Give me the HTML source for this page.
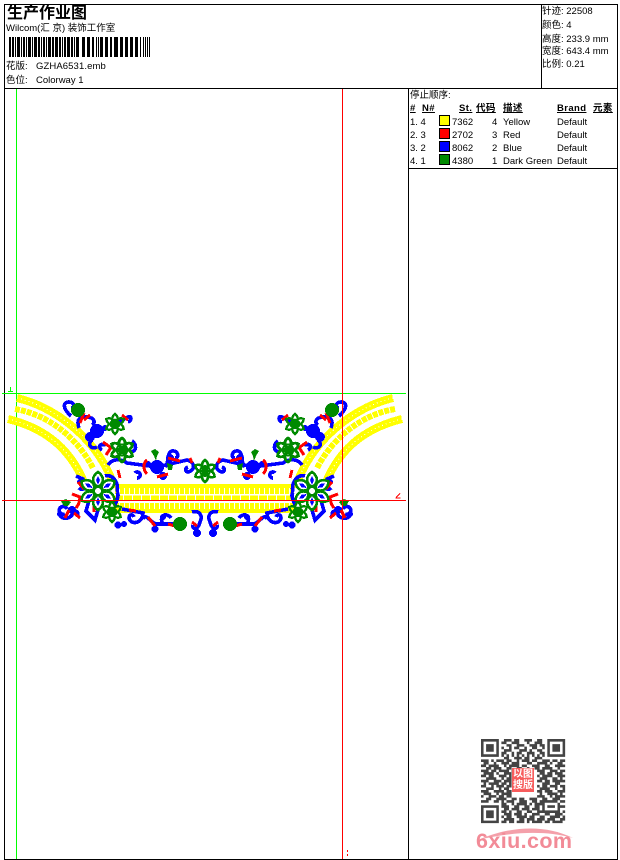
<!DOCTYPE html>
<html><head><meta charset="utf-8">
<style>
html,body{margin:0;padding:0;background:#fff}
#p{position:relative;width:620px;height:860px;overflow:hidden;background:#fff;font-family:"Liberation Sans","WenQuanYi Zen Hei","Noto Sans CJK SC",sans-serif;font-size:9.5px;color:#000}
.t{position:absolute;white-space:pre;line-height:12px}
.l{position:absolute;background:#000}
.b{font-weight:bold;letter-spacing:.4px;text-decoration:underline}
.s{position:absolute;left:439px;width:9px;height:9px;border:1px solid #000}
svg{position:absolute;left:0;top:0}
</style></head><body><div id="p">
<div class="l" style="left:4px;top:4px;width:614px;height:1px"></div>
<div class="l" style="left:4px;top:859px;width:614px;height:1px"></div>
<div class="l" style="left:4px;top:4px;width:1px;height:856px"></div>
<div class="l" style="left:617px;top:4px;width:1px;height:856px"></div>
<div class="l" style="left:4px;top:88px;width:614px;height:1px"></div>
<div class="l" style="left:541px;top:4px;width:1px;height:85px"></div>
<div class="l" style="left:408px;top:88px;width:1px;height:772px"></div>
<div class="l" style="left:408px;top:168px;width:210px;height:1px"></div>

<div class="t" style="left:7px;top:6px;font-size:16px;line-height:16px;font-weight:bold">生产作业图</div>
<div class="t" style="left:6px;top:23px">Wilcom(汇 京) 装饰工作室</div>
<div class="t" style="left:6px;top:61px">花版:</div><div class="t" style="left:36px;top:61px;letter-spacing:.1px">GZHA6531.emb</div>
<div class="t" style="left:6px;top:75px">色位:</div><div class="t" style="left:36px;top:75px">Colorway 1</div>

<svg width="620" height="860" shape-rendering="crispEdges">
<path fill="#000" d="M9 37h2v20h-2zM12 37h2v20h-2zM15 37h1v20h-1zM17 37h3v20h-3zM21 37h1v20h-1zM23 37h2v20h-2zM26 37h1v20h-1zM28 37h3v20h-3zM32 37h1v20h-1zM34 37h3v20h-3zM38 37h2v20h-2zM41 37h1v20h-1zM43 37h2v20h-2zM46 37h1v20h-1zM48 37h3v20h-3zM52 37h2v20h-2zM55 37h3v20h-3zM59 37h2v20h-2zM62 37h1v20h-1zM64 37h2v20h-2zM67 37h3v20h-3zM71 37h2v20h-2zM74 37h1v20h-1zM76 37h3v20h-3zM82 37h3v20h-3zM87 37h3v20h-3zM92 37h2v20h-2zM96 37h1v20h-1zM98 37h1v20h-1zM100 37h3v20h-3zM105 37h3v20h-3zM110 37h2v20h-2zM114 37h4v20h-4zM120 37h3v20h-3zM125 37h3v20h-3zM130 37h3v20h-3zM135 37h3v20h-3zM140 37h1v20h-1zM143 37h1v20h-1zM145 37h1v20h-1zM147 37h1v20h-1zM149 37h1v20h-1z"/>

<path stroke="#00ff00" fill="none" d="M16.5 89V859M2 393.5H406M10.5 387v4M8 391.5h5"/>

<defs>
<g id="star" fill="none" stroke="#008a00" stroke-width="2.4">
<path id="pt" d="M0 0C-4 -4 -3 -8 0 -10C3 -8 4 -4 0 0z"/>
<use href="#pt" transform="rotate(60)"/><use href="#pt" transform="rotate(120)"/><use href="#pt" transform="rotate(180)"/><use href="#pt" transform="rotate(240)"/><use href="#pt" transform="rotate(300)"/>
<circle r="4.5" stroke-width="1.6"/>
</g>
<g id="petal"><path d="M0 -4C-7 -8 -6 -15 0 -19C6 -15 7 -8 0 -4z" fill="#fff" stroke="#008a00" stroke-width="2.6"/><path d="M0 -6L-2 -11L0 -15L2 -11z" fill="#0000ff"/></g>
<g id="half">
<g fill="none" stroke="#ffff00">
<path stroke-width="8" d="M17 398C50 406 92 432 112 480"/>
<path stroke-width="6" stroke-dasharray="5 1" d="M15 409C45 414 75 434 93 468"/>
<path stroke-width="8" d="M8 419C40 427 68 444 84 482"/>
</g>
<g fill="none" stroke="#fff" stroke-width="1" stroke-dasharray="1 3">
<path d="M17 398C50 406 92 432 112 480"/>
<path d="M8 419C40 427 68 444 84 482"/>
</g>
<g fill="none" stroke="#0000ff" stroke-width="3.6">
<path d="M71 416C62 408 63 402 69 402C75 402 75 408 71 408"/>
<path d="M79 428C76 420 80 415 88 417C94 418 96 422 92 425"/>
<path d="M97 447C91 450 87 444 92 440M102 450C97 447 100 443 106 445"/>
<path d="M113 425L128 417C132 415 132 421 128 422"/>
<path d="M130 452C137 452 137 444 132 441"/>
<path d="M108 465C112 459 120 458 127 463L157 467L187 460C195 462 196 470 188 472C185 472 185 468 188 467"/>
<path d="M137 478a3 3 0 1 0 -2 -5"/>
<path d="M165 467C170 462 166 453 172 451C178 450 180 458 175 458"/>
<path d="M122 509L143 513C143 523 131 526 129 518C129 514 133 514 134 517"/>
<path d="M143 519C146 512 151 524 157 524L180 524M163 524C158 515 167 512 171 518"/>
<path d="M192 512C200 510 203 516 200 522C198 530 192 530 193 525"/>
<path d="M60 514C60 519 68 520 72 515C76 510 78 510 78 516M67 509a4 4 0 1 0 -2 5"/>
<path d="M76 476L83 479C88 486 83 492 79 488M90 497L86 511L95 520L98 510"/>
<path d="M105 476C114 474 119 484 117 492M115 505C118 497 119 495 117 492"/>
</g>
<g fill="#0000ff">
<circle cx="97" cy="431" r="7"/><circle cx="90" cy="437" r="5"/><circle cx="105" cy="428" r="3"/><circle cx="157" cy="467" r="7"/><circle cx="148" cy="464" r="3"/><circle cx="163" cy="476" r="4"/><circle cx="170" cy="458" r="4"/><circle cx="118" cy="525" r="3.5"/><circle cx="124" cy="524" r="3"/><circle cx="155" cy="529" r="3.5"/><circle cx="197" cy="533" r="4"/><circle cx="163" cy="517" r="3"/><circle cx="72" cy="510" r="4"/><circle cx="60" cy="514" r="3"/><circle cx="80" cy="482" r="3"/>
</g>
<g fill="none" stroke="#ff0000" stroke-width="3">
<path d="M84 413L80 423M90 415L84 420"/><path d="M122 415L128 420"/><path d="M103 442L110 447M106 455L112 446"/>
<path d="M118 470L120 478"/><path d="M147 460C143 463 143 470 147 474M157 477L168 474"/>
<path d="M168 458L180 461M190 458L192 463"/><path d="M129 510L136 511"/><path d="M148 517L155 526M168 524L175 526M192 522L197 526"/>
<path d="M72 494L80 497C79 505 78 505 76 508M69 510L65 518M74 513L80 518"/>
<path d="M78 482L84 489"/><path d="M94 506L94 512"/>
</g>
<circle cx="78" cy="410" r="7" fill="#008a00"/><circle cx="180" cy="524" r="7" fill="#008a00"/>
<path d="M61 501L66 499L71 502L68 506L64 506z" fill="#008a00"/>
<path d="M151 451L155 449L159 452L157 456L156 461L154 456z" fill="#008a00"/><path d="M167 463L173 465L172 470L168 470z" fill="#008a00"/>
<use href="#star" x="115" y="424"/>
<use href="#star" transform="translate(122 450) scale(1.2)"/>
<use href="#star" x="112" y="512"/>
<g transform="translate(98 491)">
<use href="#petal"/><use href="#petal" transform="rotate(60)"/><use href="#petal" transform="rotate(120)"/><use href="#petal" transform="rotate(180)"/><use href="#petal" transform="rotate(240)"/><use href="#petal" transform="rotate(300)"/>
<circle r="4" fill="#fff" stroke="#008a00" stroke-width="2"/>
</g>
</g>
</defs>

<g fill="none" stroke="#ffff00">
<path stroke-width="4" d="M113 486H297M113 511H297"/>
<path stroke-width="6" stroke-dasharray="4 1" d="M115 491H295M115 506H295"/>
<path stroke-width="5" stroke-dasharray="8 1" d="M115 498H295"/>
</g>
<use href="#half"/>
<use href="#half" transform="translate(410 0) scale(-1 1)"/>
<use href="#star" transform="translate(205 471) scale(1.1)"/>
<path stroke="#ff0000" fill="none" d="M342.5 89V859M2 500.5H406M347.5 850v2M347.5 854v2M396 497.5L400 493.5M395.5 498h5"/>

<g transform="translate(481 739) scale(2.55)" fill="none" stroke="#444" stroke-width="1.02" style="filter:blur(.15px)" shape-rendering="auto">
<path d="M0 .5h7M9 .5h3M13 .5h2M17 .5h3M22 .5h2M26 .5h7
M0 1.5h1M6 1.5h1M8 1.5h2M12 1.5h3M18 1.5h1M21 1.5h3M26 1.5h1M32 1.5h1
M0 2.5h1M2 2.5h3M6 2.5h1M10 2.5h2M14 2.5h3M19 2.5h3M23 2.5h2M26 2.5h1M28 2.5h3M32 2.5h1
M0 3.5h1M2 3.5h3M6 3.5h1M8 3.5h1M11 3.5h1M13 3.5h2M17 3.5h1M20 3.5h2M24 3.5h1M26 3.5h1M28 3.5h3M32 3.5h1
M0 4.5h1M2 4.5h3M6 4.5h1M9 4.5h3M15 4.5h3M19 4.5h1M22 4.5h2M26 4.5h1M28 4.5h3M32 4.5h1
M0 5.5h1M6 5.5h1M8 5.5h2M12 5.5h1M14 5.5h2M18 5.5h3M23 5.5h2M26 5.5h1M32 5.5h1
M0 6.5h7M8 6.5h1M10 6.5h1M12 6.5h1M14 6.5h1M16 6.5h1M18 6.5h1M20 6.5h1M22 6.5h1M24 6.5h1M26 6.5h7
M9 7.5h2M13 7.5h3M17 7.5h2M21 7.5h3
M0 8.5h3M4 8.5h1M6 8.5h3M10 8.5h2M14 8.5h1M16 8.5h3M20 8.5h2M24 8.5h3M28 8.5h2M31 8.5h2
M1 9.5h2M5 9.5h1M8 9.5h3M12 9.5h3M18 9.5h2M22 9.5h4M27 9.5h1M30 9.5h2
M0 10.5h2M3 10.5h3M6 10.5h1M9 10.5h1M11 10.5h4M16 10.5h2M20 10.5h3M25 10.5h2M29 10.5h4
M2 11.5h2M5 11.5h3M10 11.5h2M14 11.5h2M18 11.5h1M21 11.5h2M24 11.5h4M30 11.5h1
M0 12.5h3M4 12.5h2M7 12.5h4M12 12.5h2M16 12.5h4M22 12.5h3M27 12.5h3M31 12.5h2
M1 13.5h4M6 13.5h1M9 13.5h3M14 13.5h1M23 13.5h2M26 13.5h2M29 13.5h3
M0 14.5h2M3 14.5h2M7 14.5h3M11 14.5h1M22 14.5h1M24 14.5h4M30 14.5h3
M2 15.5h4M8 15.5h1M10 15.5h2M23 15.5h3M28 15.5h2M31 15.5h1
M0 16.5h3M5 16.5h3M9 16.5h3M22 16.5h2M25 16.5h2M28 16.5h5
M1 17.5h1M3 17.5h4M8 17.5h2M11 17.5h1M24 17.5h3M29 17.5h2
M0 18.5h2M4 18.5h1M6 18.5h3M10 18.5h2M22 18.5h1M24 18.5h2M27 18.5h3M31 18.5h2
M2 19.5h3M7 19.5h1M9 19.5h2M23 19.5h4M29 19.5h1M32 19.5h1
M0 20.5h3M5 20.5h4M10 20.5h2M22 20.5h2M25 20.5h3M30 20.5h3
M1 21.5h3M6 21.5h1M8 21.5h4M23 21.5h1M26 21.5h4M31 21.5h1
M0 22.5h1M3 22.5h3M7 22.5h2M10 22.5h2M22 22.5h3M27 22.5h1M29 22.5h4
M2 23.5h2M6 23.5h4M12 23.5h2M15 23.5h2M19 23.5h3M24 23.5h2M28 23.5h3
M0 24.5h3M5 24.5h2M8 24.5h1M10 24.5h3M15 24.5h3M20 24.5h2M23 24.5h7M31 24.5h2
M8 25.5h2M12 25.5h1M14 25.5h4M19 25.5h1M21 25.5h3M24 25.5h1M30 25.5h1
M0 26.5h7M8 26.5h3M13 26.5h2M17 26.5h2M21 26.5h2M24 26.5h1M26 26.5h3M30 26.5h3
M0 27.5h1M6 27.5h1M9 27.5h2M12 27.5h3M16 27.5h3M20 27.5h3M24 27.5h1M30 27.5h1
M0 28.5h1M2 28.5h3M6 28.5h1M8 28.5h2M11 28.5h1M14 28.5h2M18 28.5h2M22 28.5h2M24 28.5h7M32 28.5h1
M0 29.5h1M2 29.5h3M6 29.5h1M9 29.5h3M13 29.5h3M17 29.5h1M20 29.5h3M25 29.5h2M29 29.5h3
M0 30.5h1M2 30.5h3M6 30.5h1M8 30.5h1M10 30.5h2M14 30.5h4M19 30.5h2M23 30.5h2M27 30.5h4M32 30.5h1
M0 31.5h1M6 31.5h1M9 31.5h4M15 31.5h2M18 31.5h3M22 31.5h3M26 31.5h3M31 31.5h2
M0 32.5h7M8 32.5h2M11 32.5h2M14 32.5h3M18 32.5h1M20 32.5h4M25 32.5h2M28 32.5h4"/>
</g>
<rect x="512" y="768" width="22" height="24" fill="#f75d5d"/>
<path d="M478 840C510 826 545 824 573 838C545 830 510 832 478 840z" fill="#f4a0aa" shape-rendering="auto"/>
</svg>

<div class="t" style="left:512px;top:769px;width:22px;font-size:10px;line-height:11px;color:#fff;white-space:normal;text-align:center;font-weight:bold">以图搜版</div>
<div class="t" style="left:476px;top:830px;font-size:21.5px;line-height:22px;font-weight:bold;color:#f28b97;letter-spacing:.4px;filter:blur(.3px)">6xiu.com</div>

<div class="t" style="left:542px;top:6px">针迹: 22508</div>
<div class="t" style="left:542px;top:20px">颜色: 4</div>
<div class="t" style="left:542px;top:34px">高度: 233.9 mm</div>
<div class="t" style="left:542px;top:46px">宽度: 643.4 mm</div>
<div class="t" style="left:542px;top:59px">比例: 0.21</div>

<div class="t" style="left:410px;top:90px">停止顺序:</div>
<div class="t b" style="left:410px;top:103px">#</div>
<div class="t b" style="left:422px;top:103px">N#</div>
<div class="t b" style="left:459px;top:103px">St.</div>
<div class="t b" style="left:476px;top:103px">代码</div>
<div class="t b" style="left:503px;top:103px">描述</div>
<div class="t b" style="left:557px;top:103px">Brand</div>
<div class="t b" style="left:593px;top:103px">元素</div>

<div class="t" style="left:410px;top:117px">1. 4</div><div class="s" style="top:115px;background:#ff0"></div><div class="t" style="left:452px;top:117px">7362</div><div class="t" style="left:492px;top:117px">4</div><div class="t" style="left:503px;top:117px">Yellow</div><div class="t" style="left:557px;top:117px">Default</div>
<div class="t" style="left:410px;top:130px">2. 3</div><div class="s" style="top:128px;background:#f00"></div><div class="t" style="left:452px;top:130px">2702</div><div class="t" style="left:492px;top:130px">3</div><div class="t" style="left:503px;top:130px">Red</div><div class="t" style="left:557px;top:130px">Default</div>
<div class="t" style="left:410px;top:143px">3. 2</div><div class="s" style="top:141px;background:#00f"></div><div class="t" style="left:452px;top:143px">8062</div><div class="t" style="left:492px;top:143px">2</div><div class="t" style="left:503px;top:143px">Blue</div><div class="t" style="left:557px;top:143px">Default</div>
<div class="t" style="left:410px;top:156px">4. 1</div><div class="s" style="top:154px;background:#008a00"></div><div class="t" style="left:452px;top:156px">4380</div><div class="t" style="left:492px;top:156px">1</div><div class="t" style="left:503px;top:156px">Dark Green</div><div class="t" style="left:557px;top:156px">Default</div>
</div></body></html>
